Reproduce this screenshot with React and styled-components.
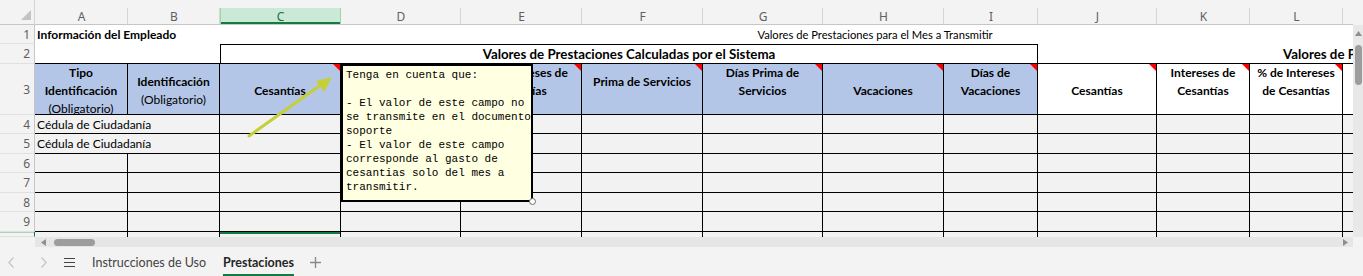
import React from "react";
import styled, { createGlobalStyle } from "styled-components";

const GlobalStyle = createGlobalStyle`
  html, body {
    margin: 0;
    padding: 0;
    background: #f3f3f3;
  }
  body {
    font-family: Lato, "Liberation Sans", sans-serif;
    color: #000;
  }
  *, *::before, *::after {
    box-sizing: border-box;
  }
`;

const colWidths = [93, 92, 121, 120, 121, 121, 120, 121, 94, 119, 93, 93, 10];
const colNames = ["A", "B", "C", "D", "E", "F", "G", "H", "I", "J", "K", "L", ""];
const rowHeights = [19, 20, 51, 19, 20, 19, 20, 19, 20, 5];

// row 3 headers, A..L (D sits fully under the comment)
const headers = [
  { lines: ["Tipo", "Identificación"], sub: "(Obligatorio)", top: 0, blue: true },
  { lines: ["Identificación"], sub: "(Obligatorio)", top: 9, blue: true },
  { lines: ["Cesantías"], top: 18, blue: true, note: true },
  { lines: [], top: 0, blue: true, note: true },
  { lines: ["% de Intereses de", "Cesantías"], top: 0, blue: true, note: true },
  { lines: ["Prima de Servicios"], top: 9, blue: true, note: true },
  { lines: ["Días Prima de", "Servicios"], top: 0, blue: true, note: true },
  { lines: ["Vacaciones"], top: 18, blue: true, note: true },
  { lines: ["Días de", "Vacaciones"], top: 0, blue: true, note: true },
  { lines: ["Cesantías"], top: 18, note: true },
  { lines: ["Intereses de", "Cesantías"], top: 0, note: true },
  { lines: ["% de Intereses", "de Cesantías"], top: 0, note: true },
];

const dataRows = [
  { n: 4, text: "Cédula de Ciudadanía" },
  { n: 5, text: "Cédula de Ciudadanía" },
  { n: 6 },
  { n: 7 },
  { n: 8 },
  { n: 9 },
];

const commentText = `Tenga en cuenta que:

- El valor de este campo no
se transmite en el documento
soporte
- El valor de este campo
corresponde al gasto de
cesantias solo del mes a
transmitir.`;

function App() {
  return (
    <>
      <GlobalStyle />
      <Window>
        <SheetRow>
          <Sheet>
            <Corner />
            {colNames.map((c, i) => (
              <ColHead key={i}>
                <ColLabel $sel={c === "C"} $last={c === ""}>
                  {c}
                </ColLabel>
              </ColHead>
            ))}

            <RowHead>1</RowHead>
            <TitleCell $span={6}>
              <strong>Información del Empleado</strong>
            </TitleCell>
            <TitleCell $span={3} $center $shift={9}>
              Valores de Prestaciones para el Mes a Transmitir
            </TitleCell>
            <TitleCell $span={4} />

            <RowHead>2</RowHead>
            <GroupCell $span={2} />
            <GroupCell $span={7} $boxed $center>
              Valores de Prestaciones Calculadas por el Sistema
            </GroupCell>
            <GroupCell $span={4} $indent={245}>
              Valores de Prestaciones Reportadas por el Empleador
            </GroupCell>

            <RowHead>3</RowHead>
            {headers.map((h, i) => (
              <HeadCell key={i} $blue={h.blue} $note={h.note} $top={h.top}>
                {h.lines.map((l, j) => (
                  <span key={j}>{l}</span>
                ))}
                {h.sub && <Sub>{h.sub}</Sub>}
              </HeadCell>
            ))}
            <HeadCell $open />

            {dataRows.map((r) => (
              <React.Fragment key={r.n}>
                <RowHead>{r.n}</RowHead>
                {r.text ? (
                  <DataCell $span={2} $r>
                    {r.text}
                  </DataCell>
                ) : (
                  <>
                    <DataCell $r />
                    <DataCell $r />
                  </>
                )}
                {colNames.slice(2).map((c, i) => (
                  <DataCell key={i} $r={c !== ""} />
                ))}
              </React.Fragment>
            ))}

            <RowHead $sel />
            {colNames.map((c, i) => (
              <TailCell key={i} $r={c !== ""} $sel={c === "C"} />
            ))}

            <Arrow width="1353" height="237" viewBox="0 0 1353 237">
              <line x1="249" y1="136" x2="322" y2="84" stroke="#c4d036" strokeWidth="3" strokeLinecap="round" />
              <polygon points="332,77 316,81 324,92" fill="#c4d036" />
            </Arrow>

            <Comment>
              {commentText}
              <Handle />
            </Comment>
          </Sheet>

          <VBar>
            <VTop />
            <VTrack>
              <svg width="7" height="5" viewBox="0 0 7 5">
                <polygon points="3.5,0 7,5 0,5" fill="#8f8f8f" />
              </svg>
              <VThumb />
            </VTrack>
          </VBar>
        </SheetRow>

        <HBar>
          <HGap $w={35} />
          <HTrack>
            <svg width="5" height="7" viewBox="0 0 5 7">
              <polygon points="0,3.5 5,0 5,7" fill="#8f8f8f" />
            </svg>
            <HThumb />
            <svg width="5" height="7" viewBox="0 0 5 7" style={{ marginLeft: "auto" }}>
              <polygon points="5,3.5 0,0 0,7" fill="#8f8f8f" />
            </svg>
          </HTrack>
          <HGap $w={10} />
        </HBar>

        <TabBar>
          <NavIcon $ml={8} width="6" height="11" viewBox="0 0 6 11">
            <polyline points="5.5,0.5 0.8,5.5 5.5,10.5" fill="none" stroke="#c2c2c2" strokeWidth="1.1" />
          </NavIcon>
          <NavIcon $ml={27} width="6" height="11" viewBox="0 0 6 11">
            <polyline points="0.5,0.5 5.2,5.5 0.5,10.5" fill="none" stroke="#c2c2c2" strokeWidth="1.1" />
          </NavIcon>
          <NavIcon $ml={17} width="11" height="11" viewBox="0 0 11 11">
            <path d="M0 1.5h11M0 5.5h11M0 9.5h11" stroke="#444" strokeWidth="1.2" />
          </NavIcon>
          <Tab $ml={17}>Instrucciones de Uso</Tab>
          <Tab $ml={17} $active>
            Prestaciones
          </Tab>
          <NavIcon $ml={16} width="11" height="11" viewBox="0 0 11 11">
            <path d="M5.5 0v11M0 5.5h11" stroke="#8a8a8a" strokeWidth="1.4" />
          </NavIcon>
        </TabBar>
      </Window>
    </>
  );
}

const Window = styled.div`
  width: 1363px;
  height: 276px;
  display: flex;
  flex-direction: column;
  overflow: hidden;
  background: #f3f3f3;
`;

const SheetRow = styled.div`
  display: flex;
`;

const Sheet = styled.div`
  position: relative;
  display: grid;
  grid-template-columns: 35px ${colWidths.map((w) => `${w}px`).join(" ")};
  grid-template-rows: 25px ${rowHeights.map((h) => `${h}px`).join(" ")};
  width: 1353px;
  height: 237px;
  overflow: hidden;
  background: #fff;
`;

const Corner = styled.div`
  position: relative;
  background: #f3f3f3;
  border-right: 1px solid #d4d4d4;
  border-bottom: 1px solid #c6c6c6;

  &::after {
    content: "";
    position: absolute;
    right: 3px;
    bottom: 4px;
    width: 10px;
    height: 10px;
    background: #c3c3c3;
    clip-path: polygon(100% 0, 100% 100%, 0 100%);
  }
`;

const ColHead = styled.div`
  padding-top: 8px;
  background: #f3f3f3;
  border-bottom: 1px solid #c6c6c6;
`;

const ColLabel = styled.div`
  height: 100%;
  display: flex;
  align-items: center;
  justify-content: center;
  font-family: "Noto Sans", Lato, sans-serif;
  font-size: 12px;
  color: ${(p) => (p.$sel ? "#1d6b3f" : "#5f5f5f")};
  background: ${(p) => (p.$sel ? "#caead7" : "transparent")};
  border-right: 1px solid ${(p) => (p.$sel ? "#9fd4b3" : p.$last ? "transparent" : "#d6d6d6")};
  border-left: 1px solid ${(p) => (p.$sel ? "#9fd4b3" : "transparent")};
  box-shadow: ${(p) => (p.$sel ? "inset 0 -2px 0 #107c41" : "none")};
  margin-bottom: ${(p) => (p.$sel ? "-1px" : "0")};
`;

const RowHead = styled.div`
  display: flex;
  align-items: center;
  justify-content: flex-end;
  padding-right: 4px;
  overflow: hidden;
  background: #f3f3f3;
  border-right: 1px solid ${(p) => (p.$sel ? "#107c41" : "#c6c6c6")};
  border-bottom: 1px solid #e0e0e0;
  box-shadow: ${(p) => (p.$sel ? "inset 0 1px 0 #a6d8b8" : "none")};
  font-family: "Noto Sans", Lato, sans-serif;
  font-size: 12px;
  color: #5f5f5f;
`;

const TitleCell = styled.div`
  grid-column: span ${(p) => p.$span || 1};
  display: flex;
  align-items: center;
  justify-content: ${(p) => (p.$center ? "center" : "flex-start")};
  padding-left: ${(p) => (p.$center ? p.$shift || 0 : 2)}px;
  white-space: nowrap;
  font-size: ${(p) => (p.$center ? "11.2px" : "12px")};
  background: #fff;

  strong {
    font-weight: 700;
  }
`;

const GroupCell = styled.div`
  grid-column: span ${(p) => p.$span || 1};
  display: flex;
  align-items: center;
  justify-content: ${(p) => (p.$center ? "center" : "flex-start")};
  padding-left: ${(p) => p.$indent || 0}px;
  white-space: nowrap;
  overflow: hidden;
  font-size: 13.3px;
  font-weight: 700;
  background: #fff;
  border-bottom: 1px solid #000;
  border-top: ${(p) => (p.$boxed ? "1px solid #000" : "none")};
  border-left: ${(p) => (p.$boxed ? "1px solid #000" : "none")};
  border-right: ${(p) => (p.$boxed ? "1px solid #000" : "none")};
`;

const HeadCell = styled.div`
  position: relative;
  display: flex;
  flex-direction: column;
  align-items: center;
  padding-top: ${(p) => p.$top || 0}px;
  text-align: center;
  white-space: nowrap;
  font-size: 12px;
  font-weight: 700;
  line-height: 18px;
  background: ${(p) => (p.$blue ? "#b4c6e7" : "#fff")};
  border-right: ${(p) => (p.$open ? "none" : "1px solid #000")};
  border-bottom: 1px solid #000;

  &::after {
    content: "";
    display: ${(p) => (p.$note ? "block" : "none")};
    position: absolute;
    top: 0;
    right: 0;
    border-top: 7px solid #ff0000;
    border-left: 7px solid transparent;
  }
`;

const Sub = styled.span`
  font-weight: 400;
`;

const DataCell = styled.div`
  grid-column: span ${(p) => p.$span || 1};
  display: flex;
  align-items: center;
  padding-left: 2px;
  white-space: nowrap;
  font-size: 12px;
  background: #f2f2f2;
  border-right: ${(p) => (p.$r ? "1px solid #000" : "none")};
  border-bottom: 1px solid #000;
`;

const TailCell = styled.div`
  background: #f2f2f2;
  border-right: ${(p) => (p.$r ? "1px solid #000" : "none")};
  box-shadow: ${(p) => (p.$sel ? "inset 0 2px 0 #107c41" : "none")};
`;

const Arrow = styled.svg`
  position: absolute;
  left: 0;
  top: 0;
  pointer-events: none;
`;

const Comment = styled.div`
  position: absolute;
  left: 341px;
  top: 64px;
  width: 192px;
  height: 138px;
  padding: 2px 0 0 3px;
  background: #ffffe1;
  border: 2px solid #000;
  font-family: "Liberation Mono", "DejaVu Sans Mono", monospace;
  font-size: 11px;
  line-height: 14px;
  white-space: pre;
  color: #000;
`;

const Handle = styled.span`
  position: absolute;
  right: -5px;
  bottom: -5px;
  width: 7px;
  height: 7px;
  border-radius: 50%;
  background: #fff;
  border: 1px solid #6f6f6f;
`;

const VBar = styled.div`
  width: 10px;
  height: 237px;
  display: flex;
  flex-direction: column;
`;

const VTop = styled.div`
  height: 25px;
  background: #f3f3f3;
`;

const VTrack = styled.div`
  flex: 1;
  display: flex;
  flex-direction: column;
  align-items: center;
  gap: 9px;
  padding-top: 6px;
  background: #e8e8e8;
`;

const VThumb = styled.div`
  width: 7px;
  height: 40px;
  border-radius: 4px;
  background: #9d9d9d;
`;

const HBar = styled.div`
  height: 10px;
  display: flex;
`;

const HGap = styled.div`
  width: ${(p) => p.$w}px;
  background: #f3f3f3;
`;

const HTrack = styled.div`
  flex: 1;
  display: flex;
  align-items: center;
  gap: 8px;
  padding: 0 5px 0 6px;
  background: #e6e6e6;
`;

const HThumb = styled.div`
  width: 41px;
  height: 7px;
  border-radius: 4px;
  background: #9d9d9d;
`;

const TabBar = styled.div`
  flex: 1;
  display: flex;
  align-items: center;
  background: #f3f3f3;
`;

const NavIcon = styled.svg`
  flex-shrink: 0;
  margin-left: ${(p) => p.$ml || 0}px;
  margin-top: 2px;
`;

const Tab = styled.div`
  align-self: stretch;
  display: flex;
  align-items: center;
  margin-left: ${(p) => p.$ml || 0}px;
  padding-top: 3px;
  font-size: 12.5px;
  font-weight: ${(p) => (p.$active ? 700 : 400)};
  color: ${(p) => (p.$active ? "#262626" : "#444")};
  border-bottom: 2px solid ${(p) => (p.$active ? "#107c41" : "transparent")};
`;

export default App;
